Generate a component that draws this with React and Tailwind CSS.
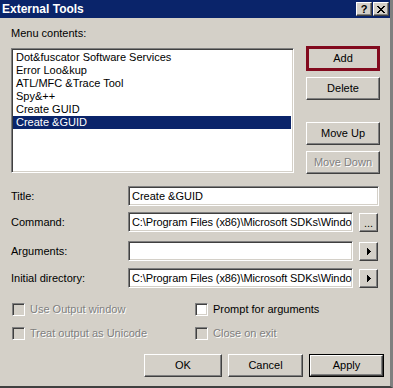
import React from "react";

const FONT = { fontFamily: '"Liberation Sans", Arial, sans-serif' };

const raised =
  "border border-t-white border-l-white border-r-[#404040] border-b-[#404040] shadow-[inset_-1px_-1px_0_#808080]";
const sunken =
  "border border-t-[#808080] border-l-[#808080] border-r-white border-b-white shadow-[inset_1px_1px_0_#404040,inset_-1px_-1px_0_#d4d0c8]";
const disabledText = "text-[#808080] [text-shadow:1px_1px_0_#fff]";

function Btn({ children, className = "", disabled }) {
  return (
    <div
      className={`flex items-center justify-center bg-[#d4d0c8] text-[11px] ${raised} ${
        disabled ? disabledText : "text-black"
      } ${className}`}
    >
      {children}
    </div>
  );
}

function Field({ value, className = "" }) {
  return (
    <div
      className={`h-[20px] bg-white ${sunken} overflow-hidden whitespace-nowrap text-[11px] leading-[18px] pl-[3px] ${className}`}
    >
      {value}
    </div>
  );
}

function Arrow() {
  return (
    <svg width="4" height="7" viewBox="0 0 4 7">
      <path d="M0 0h1v7h-1zM1 1h1v5h-1zM2 2h1v3h-1zM3 3h1v1h-1z" fill="#000" />
    </svg>
  );
}

function Check({ label, disabled }) {
  return (
    <div className="flex items-center h-[13px]">
      <div className={`w-[13px] h-[13px] ${sunken} ${disabled ? "bg-[#d4d0c8]" : "bg-white"}`} />
      <span className={`ml-[5px] text-[11px] ${disabled ? disabledText : "text-black"}`}>{label}</span>
    </div>
  );
}

const items = [
  "Dot&fuscator Software Services",
  "Error Loo&kup",
  "ATL/MFC &Trace Tool",
  "Spy&++",
  "Create GUID",
  "Create &GUID",
];

// only the part the field shows
const path = "C:\\Program Files (x86)\\Microsoft SDKs\\Windo";

export default function App() {
  return (
    <div
      style={FONT}
      className="w-[393px] h-[388px] bg-[#d4d0c8] text-black flex flex-col overflow-hidden border-r-[3px] border-b-[2px] border-r-[#808080] border-b-[#404040]"
    >
      {/* Title bar */}
      <div className="h-[18px] bg-[#0a246a] flex items-center justify-between pl-[2px] pr-[1px]">
        <span className="text-white font-bold text-[12px] leading-none">External Tools</span>
        <div className="flex">
          <Btn className="w-[16px] h-[14px] font-bold text-[11px] leading-none">?</Btn>
          <Btn className="w-[16px] h-[14px] ml-[1px]">
            <svg width="8" height="7" viewBox="0 0 8 7">
              <path d="M0 0l7 7M1 0l7 7M7 0l-7 7M8 0l-7 7" stroke="#000" strokeWidth="1" />
            </svg>
          </Btn>
        </div>
      </div>

      {/* Menu list + side buttons */}
      <div className="flex pl-[11px]">
        <div className="flex flex-col w-[283px]">
          <div className="text-[11px] h-[30px] pt-[9px] leading-[13px]">Menu contents:</div>
          <div className={`h-[125px] bg-white ${sunken} p-[2px] pl-[1px]`}>
            {items.map((t, i) => (
              <div
                key={i}
                className={`h-[13px] leading-[13px] text-[11px] pl-[3px] whitespace-nowrap ${
                  i === 5 ? "bg-[#0a246a] text-white" : ""
                }`}
              >
                {t}
              </div>
            ))}
          </div>
        </div>
        <div className="flex flex-col ml-[12px] w-[74px] pt-[28px]">
          <div className="h-[25px] border-[3px] border-[#820a1e] bg-[#d4d0c8] flex items-center justify-center text-[11px]">
            Add
          </div>
          <Btn className="h-[23px] mt-[6px]">Delete</Btn>
          <Btn className="h-[23px] mt-[22px]">Move Up</Btn>
          <Btn className="h-[23px] mt-[6px]" disabled>
            Move Down
          </Btn>
        </div>
      </div>

      {/* Fields */}
      <div className="flex flex-col pl-[11px] mt-[12px]">
        <div className="flex items-center">
          <span className="w-[117px] text-[11px]">Title:</span>
          <Field value="Create &GUID" className="w-[251px]" />
        </div>
        <div className="flex items-center mt-[6px]">
          <span className="w-[117px] text-[11px]">Command:</span>
          <Field value={path} className="w-[225px] tracking-[-0.1px]" />
          <Btn className="w-[19px] h-[19px] ml-[6px] items-end pb-[2px] leading-none">...</Btn>
        </div>
        <div className="flex items-center mt-[9px]">
          <span className="w-[117px] text-[11px]">Arguments:</span>
          <Field value="" className="w-[225px]" />
          <Btn className="w-[19px] h-[19px] ml-[6px]">
            <Arrow />
          </Btn>
        </div>
        <div className="flex items-center mt-[7px]">
          <span className="w-[117px] text-[11px]">Initial directory:</span>
          <Field value={path} className="w-[225px] tracking-[-0.1px]" />
          <Btn className="w-[19px] h-[19px] ml-[6px]">
            <Arrow />
          </Btn>
        </div>
      </div>

      {/* Options */}
      <div className="grid grid-cols-[183px_1fr] gap-y-[11px] pl-[12px] mt-[15px]">
        <Check label="Use Output window" disabled />
        <Check label="Prompt for arguments" />
        <Check label="Treat output as Unicode" disabled />
        <Check label="Close on exit" disabled />
      </div>

      {/* Dialog buttons */}
      <div className="flex pl-[144px] mt-[14px]">
        <Btn className="w-[78px] h-[23px]">OK</Btn>
        <Btn className="w-[75px] h-[23px] ml-[6px]">Cancel</Btn>
        <div className="w-[75px] h-[23px] ml-[6px] border border-black flex">
          <Btn className="flex-1">Apply</Btn>
        </div>
      </div>
    </div>
  );
}
